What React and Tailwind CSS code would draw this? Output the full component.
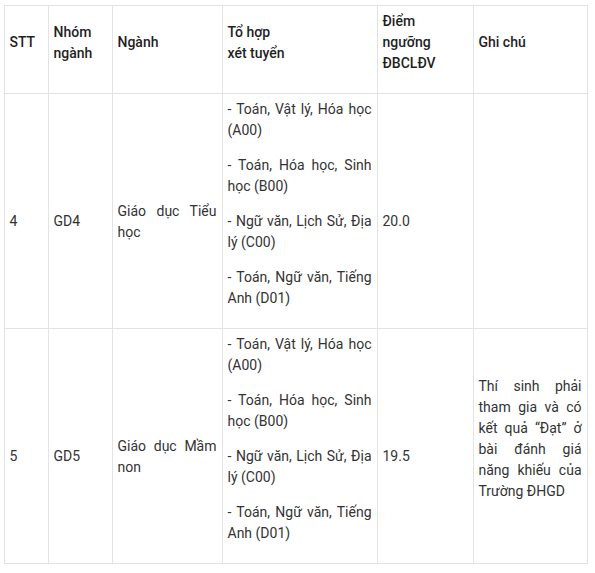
import React from "react";

const td = "border border-[#e3e3e3] px-[5px] py-[5px] align-middle";
const P = ({ children, className = "" }) => (
  <p className={"mb-[14px] leading-[21px] " + className}>{children}</p>
);

const combos = [
  "- Toán, Vật lý, Hóa học (A00)",
  "- Toán, Hóa học, Sinh học (B00)",
  "- Ngữ văn, Lịch Sử, Địa lý (C00)",
  "- Toán, Ngữ văn, Tiếng Anh (D01)",
];

function Combo() {
  return (
    <td className={td + " text-justify"}>
      {combos.map((c) => (
        <P key={c}>{c}</P>
      ))}
    </td>
  );
}

function Cell({ children, className = "" }) {
  return (
    <td className={td + " " + className}>
      <P className="pt-[35px]">{children}</P>
    </td>
  );
}

export default function App() {
  return (
    <div
      className="w-[595px] h-[573px] bg-white text-[14px] text-[#333333] pt-[5px] pl-[3.5px]"
      style={{ fontFamily: 'Roboto, "Noto Sans", sans-serif' }}
    >
      <table className="border-collapse table-fixed w-[583px]">
        <colgroup>
          <col className="w-[44px]" />
          <col className="w-[64px]" />
          <col className="w-[110px]" />
          <col className="w-[155px]" />
          <col className="w-[96px]" />
          <col className="w-[114px]" />
        </colgroup>
        <thead>
          <tr className="text-[#1f1f1f] text-left">
            <th className={td + " font-medium"}><P>STT</P></th>
            <th className={td + " font-medium"}><P>Nhóm<br />ngành</P></th>
            <th className={td + " font-medium"}><P>Ngành</P></th>
            <th className={td + " font-medium"}><P>Tổ hợp<br />xét tuyển</P></th>
            <th className={td + " font-medium"}><P>Điểm<br />ngưỡng<br />ĐBCLĐV</P></th>
            <th className={td + " font-medium"}><P>Ghi chú</P></th>
          </tr>
        </thead>
        <tbody>
          <tr>
            <Cell>4</Cell>
            <Cell>GD4</Cell>
            <Cell className="text-justify">Giáo dục Tiểu học</Cell>
            <Combo />
            <Cell>20.0</Cell>
            <td className={td}></td>
          </tr>
          <tr>
            <Cell>5</Cell>
            <Cell>GD5</Cell>
            <Cell className="text-justify">Giáo dục Mầm non</Cell>
            <Combo />
            <Cell>19.5</Cell>
            <td className={td + " text-justify"}>
              <P>
                Thí sinh phải tham gia và có kết quả “Đạt” ở bài đánh giá năng
                khiếu của Trường ĐHGD
              </P>
            </td>
          </tr>
        </tbody>
      </table>
    </div>
  );
}
